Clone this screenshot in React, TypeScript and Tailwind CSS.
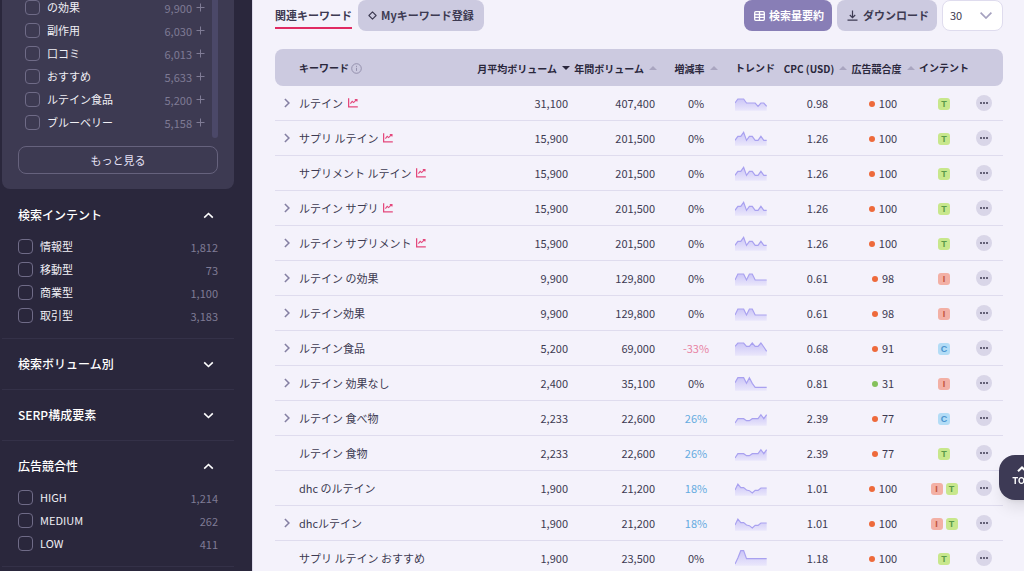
import { useState } from 'react';

type Intent = 'T' | 'I' | 'C';
type Row = {
  keyword: string;
  expandable: boolean;
  tracked?: boolean;
  monthly: string;
  yearly: string;
  change: string;
  trend: number[];
  cpc: string;
  competition: number;
  intents: Intent[];
};

const T_WAVE = [34, 22, 22, 10, 34, 22, 22, 34, 34, 22, 34, 34];
const T_TWIN = [33, 15, 15, 15, 33, 15, 15, 33, 33, 33, 33, 33];
const T_RISE = [42, 29, 29, 29, 35, 35, 29, 29, 29, 17, 29, 17];
const T_DIP = [33, 15, 26, 26, 33, 35, 42, 34, 34, 27, 27, 27];

const ROWS: Row[] = [
  { keyword: 'ルテイン', expandable: true, tracked: true, monthly: '31,100', yearly: '407,400', change: '0%', trend: [27, 15, 15, 15, 27, 27, 27, 27, 37, 27, 27, 37], cpc: '0.98', competition: 100, intents: ['T'] },
  { keyword: 'サプリ ルテイン', expandable: true, tracked: true, monthly: '15,900', yearly: '201,500', change: '0%', trend: T_WAVE, cpc: '1.26', competition: 100, intents: ['T'] },
  { keyword: 'サプリメント ルテイン', expandable: false, tracked: true, monthly: '15,900', yearly: '201,500', change: '0%', trend: T_WAVE, cpc: '1.26', competition: 100, intents: ['T'] },
  { keyword: 'ルテイン サプリ', expandable: true, tracked: true, monthly: '15,900', yearly: '201,500', change: '0%', trend: T_WAVE, cpc: '1.26', competition: 100, intents: ['T'] },
  { keyword: 'ルテイン サプリメント', expandable: true, tracked: true, monthly: '15,900', yearly: '201,500', change: '0%', trend: T_WAVE, cpc: '1.26', competition: 100, intents: ['T'] },
  { keyword: 'ルテイン の効果', expandable: true, monthly: '9,900', yearly: '129,800', change: '0%', trend: T_TWIN, cpc: '0.61', competition: 98, intents: ['I'] },
  { keyword: 'ルテイン効果', expandable: true, monthly: '9,900', yearly: '129,800', change: '0%', trend: T_TWIN, cpc: '0.61', competition: 98, intents: ['I'] },
  { keyword: 'ルテイン食品', expandable: true, monthly: '5,200', yearly: '69,000', change: '-33%', trend: [22, 12, 12, 12, 22, 22, 12, 22, 22, 12, 24, 37], cpc: '0.68', competition: 91, intents: ['C'] },
  { keyword: 'ルテイン 効果なし', expandable: true, monthly: '2,400', yearly: '35,100', change: '0%', trend: [26, 11, 11, 11, 28, 11, 28, 40, 40, 40, 40, 40], cpc: '0.81', competition: 31, intents: ['I'] },
  { keyword: 'ルテイン 食べ物', expandable: true, monthly: '2,233', yearly: '22,600', change: '26%', trend: T_RISE, cpc: '2.39', competition: 77, intents: ['C'] },
  { keyword: 'ルテイン 食物', expandable: false, monthly: '2,233', yearly: '22,600', change: '26%', trend: T_RISE, cpc: '2.39', competition: 77, intents: ['T'] },
  { keyword: 'dhc のルテイン', expandable: false, monthly: '1,900', yearly: '21,200', change: '18%', trend: T_DIP, cpc: '1.01', competition: 100, intents: ['I', 'T'] },
  { keyword: 'dhcルテイン', expandable: true, monthly: '1,900', yearly: '21,200', change: '18%', trend: T_DIP, cpc: '1.01', competition: 100, intents: ['I', 'T'] },
  { keyword: 'サプリ ルテイン おすすめ', expandable: false, monthly: '1,900', yearly: '23,500', change: '0%', trend: [45, 27, 5, 5, 29, 29, 29, 29, 29, 29, 29, 29], cpc: '1.18', competition: 100, intents: ['T'] },
];

const INTENT_STYLE: Record<Intent, string> = {
  T: 'bg-[#c8e78c] text-[#5a9a4a]',
  I: 'bg-[#f3b0a5] text-[#c2543f]',
  C: 'bg-[#b3dcf6] text-[#4a94cf]',
};

const RELATED: [string, string][] = [
  ['の効果', '9,900'],
  ['副作用', '6,030'],
  ['口コミ', '6,013'],
  ['おすすめ', '5,633'],
  ['ルテイン食品', '5,200'],
  ['ブルーベリー', '5,158'],
];

function CheckRow({ label, count, plus }: { label: string; count: string; plus?: boolean }) {
  return (
    <li className="flex h-[23px] items-center">
      <label className="flex flex-1 items-center gap-[7px] text-[11px]">
        <input
          type="checkbox"
          className="h-[15px] w-[15px] appearance-none rounded-[4px] border border-[#6f6b87] checked:bg-[#8a80b8]"
        />
        <span>{label}</span>
      </label>
      <span className="pt-0.5 text-[11px] text-[#7f7b95]">{count}</span>
      {plus && (
        <button type="button" aria-label={`${label}を追加`} className="ml-1 text-[#7f7b95]">
          <svg width="9" height="9" viewBox="0 0 9 9" fill="none" stroke="currentColor">
            <path d="M4.5 0.5v8M0.5 4.5h8" />
          </svg>
        </button>
      )}
    </li>
  );
}

function Section({ title, items, initialOpen = false, first = false }: { title: string; items: [string, string][]; initialOpen?: boolean; first?: boolean }) {
  const [open, setOpen] = useState(initialOpen);
  return (
    <section className={`border-t px-4 pt-[15px] ${first ? 'border-transparent' : 'border-[#343148]'} ${open ? 'pb-[11px]' : 'pb-[15px]'}`}>
      <h2>
        <button
          type="button"
          aria-expanded={open}
          onClick={() => setOpen(!open)}
          className="flex h-5 w-full items-center justify-between pr-1 text-left text-[12px] font-medium text-white"
        >
          {title}
          <svg width="11" height="7" viewBox="0 0 11 7" fill="none" stroke="currentColor" strokeWidth="1.6" className={open ? '' : 'rotate-180'}>
            <path d="M1.2 5.6 5.5 1.5l4.3 4.1" />
          </svg>
        </button>
      </h2>
      {open && (
        <ul className="mt-[10px]">
          {items.map(([label, count]) => (
            <CheckRow key={label} label={label} count={count} />
          ))}
        </ul>
      )}
    </section>
  );
}

function Sidebar() {
  return (
    <aside className="w-[253px] shrink-0 border-r border-[#dddaea] bg-[#2a273c] pr-[18px] pl-0.5 text-[#f0eff5]">
      <div className="overflow-hidden rounded-b-lg bg-[#3d3a52] px-4 pb-[15px]">
        <div className="-mt-1 flex gap-[7px] pl-[7px]">
          <ul className="flex-1">
            {RELATED.map(([label, count]) => (
              <CheckRow key={label} label={label} count={count} plus />
            ))}
          </ul>
          <div className="-mb-1 w-1.5 rounded-b-full bg-[#4b4868]" />
        </div>
        <button type="button" className="mt-3 h-7 w-full rounded-lg border border-[#66627d] text-[11px] text-[#e6e2f7]">
          もっと見る
        </button>
      </div>
      <Section
        title="検索インテント"
        first
        initialOpen
        items={[['情報型', '1,812'], ['移動型', '73'], ['商業型', '1,100'], ['取引型', '3,183']]}
      />
      <Section title="検索ボリューム別" items={[]} />
      <Section title="SERP構成要素" items={[]} />
      <Section title="広告競合性" initialOpen items={[['HIGH', '1,214'], ['MEDIUM', '262'], ['LOW', '411']]} />
      <div className="border-t border-[#343148]" />
    </aside>
  );
}

function Sparkline({ values, id }: { values: number[]; id: string }) {
  const points = values.map((v, i) => `${((i * 95) / 11).toFixed(1)},${v}`).join(' ');
  return (
    <svg width="32" height="20" viewBox="0 -3 96 60" aria-hidden="true">
      <defs>
        <linearGradient id={id} x1="0" y1="0" x2="0" y2="1">
          <stop offset="0" stopColor="#cbc5f7" />
          <stop offset="1" stopColor="#eae7fb" />
        </linearGradient>
      </defs>
      <polygon points={`0,50 ${points} 95,50`} fill={`url(#${id})`} />
      <polyline points={points} fill="none" stroke="#a9a1f0" strokeWidth="3.5" />
    </svg>
  );
}

function SortHead({ label, active }: { label: string; active?: boolean }) {
  return (
    <button type="button" className="inline-flex items-center gap-[5px] align-middle whitespace-nowrap">
      {label}
      <svg width="8" height="4" viewBox="0 0 8 4" className={active ? 'rotate-180 fill-[#2a273c]' : 'fill-[#a9a5c0]'}>
        <path d="M4 0 8 4H0z" />
      </svg>
    </button>
  );
}

function ChartIcon() {
  return (
    <svg width="10" height="10" viewBox="0 0 10 10" fill="none" stroke="#e4487c" aria-hidden="true">
      <path d="M0.6 0.3v8.6h9.2" strokeWidth="1.3" />
      <path d="M2.4 5.6 4.2 3.4 5.6 4.6 8.6 1.7M6.8 1.6h2.2v1.8" strokeWidth="1.1" />
    </svg>
  );
}

function Toolbar() {
  return (
    <div className="flex h-[31px] items-center">
      <nav className="flex h-full items-center gap-1.5 text-[11px] font-bold">
        <a href="#related" className="border-b-2 border-[#e02a62] leading-[24px]">
          関連キーワード
        </a>
        <a href="#mine" className="flex h-full items-center gap-1 rounded-lg bg-[#cccae0] px-2.5">
          <svg width="9" height="9" viewBox="0 0 9 9" fill="none" stroke="#3d3a52" strokeWidth="1.1" strokeLinejoin="round">
            <path d="M4.5 0.9 8.1 4.5 4.5 8.1 0.9 4.5z" />
          </svg>
          Myキーワード登録
        </a>
      </nav>
      <div className="ml-auto flex h-full gap-[5px] text-[11px] font-bold">
        <button type="button" className="flex items-center gap-1 rounded-lg bg-[#887eb6] pr-2 pl-2.5 text-white">
          <svg width="11" height="10" viewBox="0 0 11 10" fill="none" stroke="currentColor" strokeWidth="1.3">
            <rect x="0.7" y="0.7" width="9.6" height="8.6" rx="1" />
            <path d="M0.7 3.5h9.6M0.7 6.4h9.6M5.5 0.7v8.6" />
          </svg>
          検索量要約
        </button>
        <button type="button" className="flex items-center gap-[5px] rounded-lg bg-[#cccae0] pr-2 pl-2.5">
          <svg width="11" height="11" viewBox="0 0 11 11" fill="none" stroke="currentColor" strokeWidth="1.2">
            <path d="M5.5 0.5v7M2.8 5l2.7 2.7L8.2 5M0.5 10.2h10" />
          </svg>
          ダウンロード
        </button>
        <div className="grid w-[61px] items-center">
          <select
            aria-label="表示件数"
            defaultValue="30"
            className="col-start-1 row-start-1 h-full w-full appearance-none rounded-lg border border-[#dfdcee] bg-white pl-[7px] text-[11px] font-normal"
          >
            <option>30</option>
            <option>50</option>
            <option>100</option>
          </select>
          <svg width="12" height="7" viewBox="0 0 12 7" fill="none" stroke="#a5a1bf" strokeWidth="1.7" className="pointer-events-none col-start-1 row-start-1 mr-[11px] justify-self-end">
            <path d="M0.6 0.7 6 6l5.4-5.3" />
          </svg>
        </div>
      </div>
    </div>
  );
}

function KeywordTable() {
  return (
    <table className="mt-[18px] w-full table-fixed border-separate border-spacing-0 text-[11px]">
      <colgroup>
        <col className="w-6" />
        <col />
        <col className="w-[100px]" />
        <col className="w-[87px]" />
        <col className="w-[78px]" />
        <col className="w-[45px]" />
        <col className="w-[71px]" />
        <col className="w-[64px]" />
        <col className="w-[58px]" />
        <col className="w-[30px]" />
      </colgroup>
      <thead className="text-[10px] text-[#2a273c]">
        <tr className="h-[37px] *:bg-[#cccae0] *:p-0 *:font-bold">
          <th className="rounded-l-lg" />
          <th className="text-left">
            <span className="flex items-center gap-[2px]">
              キーワード
              <svg width="11" height="11" viewBox="0 0 11 11" fill="none" stroke="#8f8ba8" strokeWidth="0.9" className="mt-0.5">
                <circle cx="5.5" cy="5.5" r="4.8" />
                <path d="M5.5 4.8v3.1M5.5 2.8v1.1" />
              </svg>
            </span>
          </th>
          <th className="text-right"><SortHead label="月平均ボリューム" active /></th>
          <th className="text-right"><SortHead label="年間ボリューム" /></th>
          <th><SortHead label="増減率" /></th>
          <th className="text-left whitespace-nowrap">トレンド</th>
          <th><SortHead label="CPC (USD)" /></th>
          <th><SortHead label="広告競合度" /></th>
          <th>インテント</th>
          <th className="rounded-r-lg" />
        </tr>
      </thead>
      <tbody>
        {ROWS.map((row, i) => (
          <tr key={row.keyword} className="h-[35px] *:border-b *:border-[#dfdcee] *:p-0">
            <td>
              {row.expandable && (
                <button type="button" aria-label={`${row.keyword}を展開`} className="flex w-full justify-center">
                  <svg width="6" height="10" viewBox="0 0 6 10" fill="none" stroke="#8580a3" strokeWidth="1.6">
                    <path d="M0.9 1 4.9 5 0.9 9" />
                  </svg>
                </button>
              )}
            </td>
            <td>
              <span className="flex items-center gap-[5px]">
                {row.keyword}
                {row.tracked && <ChartIcon />}
              </span>
            </td>
            <td className="pr-0.5! text-right">{row.monthly}</td>
            <td className="pr-0.5! text-right">{row.yearly}</td>
            <td className={`text-center ${row.change === '0%' ? '' : row.change.startsWith('-') ? 'text-[#e883a3]' : 'text-[#64abe0]'}`}>
              {row.change}
            </td>
            <td><Sparkline values={row.trend} id={`trend-${i}`} /></td>
            <td className="pl-1! text-center">{row.cpc}</td>
            <td>
              <span className="flex items-center justify-center gap-1">
                <span className={`mt-0.5 h-1.5 w-1.5 rounded-full ${row.competition > 60 ? 'bg-[#ee6a3b]' : 'bg-[#85c15c]'}`} />
                {row.competition}
              </span>
            </td>
            <td>
              <span className="flex justify-center gap-[3px] pt-0.5">
                {row.intents.map((intent) => (
                  <span key={intent} className={`flex h-3 w-3 items-center justify-center rounded-[3px] font-['Liberation_Sans',sans-serif] text-[9px] leading-none font-bold ${INTENT_STYLE[intent]}`}>
                    {intent}
                  </span>
                ))}
              </span>
            </td>
            <td>
              <button type="button" aria-label="メニュー" className="ml-[3px] flex h-4 w-4 items-center justify-center rounded-full bg-[#d9d6e8]">
                <svg width="10" height="2" viewBox="0 0 10 2" fill="#3d3a52">
                  <circle cx="2" cy="1" r="1" />
                  <circle cx="5" cy="1" r="1" />
                  <circle cx="8" cy="1" r="1" />
                </svg>
              </button>
            </td>
          </tr>
        ))}
      </tbody>
    </table>
  );
}

export default function App() {
  return (
    <div className="flex h-screen overflow-hidden bg-[#f4f2fb] font-['Noto_Sans_CJK_JP',sans-serif] text-[#3d3a52]">
      <Sidebar />
      <main className="min-w-0 flex-1 pr-[21px] pl-[22px]">
        <Toolbar />
        <KeywordTable />
      </main>
      <button
        type="button"
        className="fixed -right-5 bottom-[71px] flex h-[45px] w-[45px] flex-col items-center justify-center gap-[3px] rounded-2xl bg-[#3d3a55] pb-0.5 font-['Inter',sans-serif] text-[9px] leading-3 font-bold text-white shadow-lg"
      >
        <svg width="10" height="6" viewBox="0 0 10 6" fill="none" stroke="currentColor" strokeWidth="2">
          <path d="M1 5.2 5 1.4l4 3.8" />
        </svg>
        TOP
      </button>
    </div>
  );
}
